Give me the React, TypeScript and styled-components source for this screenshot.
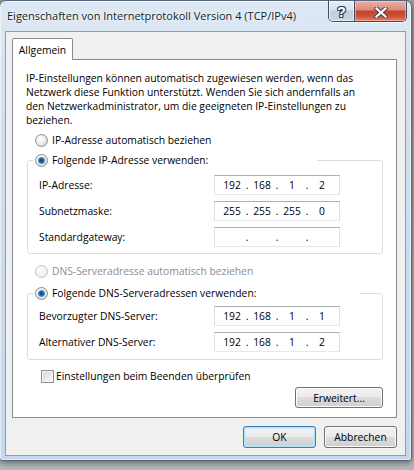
import styled, { createGlobalStyle } from "styled-components";

const GlobalStyle = createGlobalStyle`
  html, body {
    margin: 0;
    padding: 0;
  }
  body {
    background: #b4b6b9;
    font-family: "Open Sans", "Noto Sans", sans-serif;
    font-size: 10.3px;
    color: #000;
  }
`;

type Ip = [string, string, string, string];

const ipRows: { label: string; value: Ip }[] = [
  { label: "IP-Adresse:", value: ["192", "168", "1", "2"] },
  { label: "Subnetzmaske:", value: ["255", "255", "255", "0"] },
  { label: "Standardgateway:", value: ["", "", "", ""] },
];

const dnsRows: { label: string; value: Ip }[] = [
  { label: "Bevorzugter DNS-Server:", value: ["192", "168", "1", "1"] },
  { label: "Alternativer DNS-Server:", value: ["192", "168", "1", "2"] },
];

const IpField = ({ value }: { value: Ip }) => (
  <IpBox>
    {value.map((part, i) => (
      <IpPart key={i}>
        <Octet>{part}</Octet>
        {i < 3 && <Dot>.</Dot>}
      </IpPart>
    ))}
  </IpBox>
);

const App = () => {
  return (
    <Desktop>
      <GlobalStyle />
      <Window>
        <TitleBar>
          <Title>Eigenschaften von Internetprotokoll Version 4 (TCP/IPv4)</Title>
          <CaptionButtons>
            <HelpButton>?</HelpButton>
            <CloseButton>
              <svg width="14" height="11" viewBox="0 0 14 11">
                <path
                  d="M2.5 1.5 L11.5 9.5 M11.5 1.5 L2.5 9.5"
                  stroke="#3a4656"
                  strokeWidth="4.2"
                  strokeLinecap="square"
                />
                <path
                  d="M2.5 1.5 L11.5 9.5 M11.5 1.5 L2.5 9.5"
                  stroke="#ffffff"
                  strokeWidth="2.2"
                  strokeLinecap="square"
                />
              </svg>
            </CloseButton>
          </CaptionButtons>
        </TitleBar>

        <Client>
          <TabStrip>
            <Tab>Allgemein</Tab>
          </TabStrip>
          <Panel>
            <Intro>
              IP-Einstellungen können automatisch zugewiesen werden, wenn das
              <br />
              Netzwerk diese Funktion unterstützt. Wenden Sie sich andernfalls an
              <br />
              den Netzwerkadministrator, um die geeigneten IP-Einstellungen zu
              <br />
              beziehen.
            </Intro>

            <OptionRow $top={6}>
              <Radio />
              <span>IP-Adresse automatisch beziehen</span>
            </OptionRow>

            <GroupBox $top={6} $padTop={8} $padBottom={6}>
              <GroupLegend $width={284}>
                <Radio $checked />
                <span>Folgende IP-Adresse verwenden:</span>
              </GroupLegend>
              <FieldGrid>
                {ipRows.map((row) => (
                  <FieldRow key={row.label}>
                    <FieldLabel>{row.label}</FieldLabel>
                    <IpField value={row.value} />
                  </FieldRow>
                ))}
              </FieldGrid>
            </GroupBox>

            <OptionRow $top={10} $disabled>
              <Radio $disabled />
              <span>DNS-Serveradresse automatisch beziehen</span>
            </OptionRow>

            <GroupBox $top={8} $padTop={6} $padBottom={7}>
              <GroupLegend $width={327}>
                <Radio $checked />
                <span>Folgende DNS-Serveradressen verwenden:</span>
              </GroupLegend>
              <FieldGrid>
                {dnsRows.map((row) => (
                  <FieldRow key={row.label}>
                    <FieldLabel>{row.label}</FieldLabel>
                    <IpField value={row.value} />
                  </FieldRow>
                ))}
              </FieldGrid>
            </GroupBox>

            <CheckRow>
              <CheckBox />
              <span>Einstellungen beim Beenden überprüfen</span>
            </CheckRow>

            <AdvancedRow>
              <Button $w={88} $h={21}>
                Erweitert...
              </Button>
            </AdvancedRow>
          </Panel>

          <Footer>
            <Button $w={73} $h={22} $primary>
              OK
            </Button>
            <Button $w={73} $h={22}>
              Abbrechen
            </Button>
          </Footer>
        </Client>
      </Window>
    </Desktop>
  );
};

export default App;

const Desktop = styled.div`
  width: 414px;
  height: 470px;
  overflow: hidden;
  background: linear-gradient(180deg, #9a9ea2 0%, #b6b8ba 100%);
`;

const Window = styled.div`
  box-sizing: border-box;
  width: 413px;
  height: 461px;
  margin-left: -1px;
  padding: 0 5px 4px 5px;
  border: 1px solid #56677c;
  border-radius: 7px 7px 3px 3px;
  background: linear-gradient(180deg, #dde8f3 0%, #d0def0 30%, #c4d7ed 100%);
  box-shadow: 0 2px 6px rgba(0, 0, 0, 0.45),
    inset 0 0 0 1px rgba(255, 255, 255, 0.55);
  display: flex;
  flex-direction: column;
`;

const TitleBar = styled.div`
  height: 30px;
  display: flex;
  justify-content: space-between;
  align-items: flex-start;
`;

const Title = styled.div`
  margin: 7px 0 0 2px;
  font-size: 11px;
  line-height: 16px;
  color: #111c2a;
  white-space: nowrap;
  text-shadow: 0 0 6px rgba(255, 255, 255, 0.95), 0 0 2px #fff;
`;

const CaptionButtons = styled.div`
  display: flex;
  height: 20px;
  margin-right: -1px;
  border: 1px solid #3d4c5f;
  border-top: none;
  border-radius: 0 0 5px 5px;
  overflow: hidden;
  box-shadow: 0 1px 0 rgba(255, 255, 255, 0.7);
`;

const HelpButton = styled.div`
  width: 26px;
  display: flex;
  justify-content: center;
  align-items: center;
  padding-top: 2px;
  box-sizing: border-box;
  border-right: 1px solid #3d4c5f;
  background: linear-gradient(
    180deg,
    #e9eff6 0%,
    #d8e2ee 45%,
    #bfcddd 50%,
    #c9d6e5 100%
  );
  box-shadow: inset 0 0 0 1px rgba(255, 255, 255, 0.6);
  font-family: "Liberation Sans", Arial, sans-serif;
  font-weight: 700;
  font-size: 14px;
  color: #fff;
  text-shadow: 1px 0 #3a4656, -1px 0 #3a4656, 0 1px #3a4656, 0 -1px #3a4656,
    1px 1px #3a4656, -1px -1px #3a4656, 1px -1px #3a4656, -1px 1px #3a4656;
`;

const CloseButton = styled.div`
  width: 51px;
  display: flex;
  justify-content: center;
  align-items: center;
  padding-top: 2px;
  box-sizing: border-box;
  background: linear-gradient(
    180deg,
    #eab0a3 0%,
    #dc8a78 45%,
    #c6432e 50%,
    #cc4f37 75%,
    #de8365 100%
  );
  box-shadow: inset 0 0 0 1px rgba(255, 220, 210, 0.5);
`;

const Client = styled.div`
  box-sizing: border-box;
  width: 401px;
  height: 425px;
  padding: 6px 8px 0 6px;
  border: 1px solid #8d9eb3;
  background: #f0f0f0;
  display: flex;
  flex-direction: column;
`;

const TabStrip = styled.div`
  display: flex;
`;

const Tab = styled.div`
  position: relative;
  z-index: 1;
  box-sizing: border-box;
  width: 61px;
  height: 22px;
  margin-bottom: -1px;
  display: flex;
  justify-content: center;
  align-items: center;
  border: 1px solid #898c95;
  border-bottom: none;
  border-radius: 2px 2px 0 0;
  background: #fff;
`;

const Panel = styled.div`
  box-sizing: border-box;
  width: 385px;
  height: 359px;
  padding: 11px 13px 0 13px;
  border: 1px solid #898c95;
  background: #fff;
  display: flex;
  flex-direction: column;
`;

const Intro = styled.p`
  margin: 0;
  line-height: 14px;
  white-space: nowrap;
`;

const OptionRow = styled.div<{ $top: number; $disabled?: boolean }>`
  display: flex;
  align-items: center;
  gap: 4px;
  height: 14px;
  margin-top: ${({ $top }) => $top}px;
  padding-left: 9px;
  color: ${({ $disabled }) => ($disabled ? "#8d8d8d" : "#000")};
`;

const Radio = styled.span<{ $checked?: boolean; $disabled?: boolean }>`
  flex: none;
  box-sizing: border-box;
  width: 13px;
  height: 13px;
  border-radius: 50%;
  border: 1px solid ${({ $disabled }) => ($disabled ? "#c4c4c4" : "#8b8c8c")};
  background: ${({ $disabled }) =>
    $disabled
      ? "radial-gradient(circle at 40% 35%, #fbfbfb 0%, #f2f2f2 60%, #e6e6e6 100%)"
      : "radial-gradient(circle at 40% 35%, #ffffff 0%, #eeeeee 45%, #cfcfcf 100%)"};
  display: flex;
  align-items: center;
  justify-content: center;

  &::after {
    content: "";
    display: ${({ $checked }) => ($checked ? "block" : "none")};
    width: 7px;
    height: 7px;
    border-radius: 50%;
    background: radial-gradient(
      circle at 50% 50%,
      #153f66 0%,
      #2462a0 40%,
      #5fb0e4 75%,
      #a8dbf6 100%
    );
  }
`;

const GroupBox = styled.fieldset<{
  $top: number;
  $padTop: number;
  $padBottom: number;
}>`
  box-sizing: border-box;
  width: 356px;
  margin: ${({ $top }) => $top}px 0 0 1px;
  padding: ${({ $padTop, $padBottom }) => `${$padTop}px 0 ${$padBottom}px 11px`};
  border: 1px solid #d5dfe5;
  border-radius: 3px;
  min-width: 0;
`;

const GroupLegend = styled.legend<{ $width: number }>`
  box-sizing: border-box;
  width: ${({ $width }) => $width}px;
  height: 14px;
  margin-left: -6px;
  padding: 0 2px;
  display: flex;
  align-items: center;
  gap: 4px;
  background: #fff;
`;

const FieldGrid = styled.div`
  display: flex;
  flex-direction: column;
  gap: 6px;
`;

const FieldRow = styled.div`
  display: grid;
  grid-template-columns: 175px 126px;
  align-items: center;
  height: 20px;
`;

const FieldLabel = styled.span`
  white-space: nowrap;
`;

const IpBox = styled.div`
  box-sizing: border-box;
  height: 20px;
  padding-left: 4px;
  display: flex;
  align-items: center;
  border: 1px solid #dbdfe6;
  border-top-color: #abadb3;
  border-bottom-color: #e3e9ef;
  background: #fff;
`;

const IpPart = styled.div`
  display: flex;
  align-items: center;
`;

const Octet = styled.span`
  width: 26px;
  text-align: center;
`;

const Dot = styled.span`
  width: 4px;
  text-align: center;
`;

const CheckRow = styled.div`
  display: flex;
  align-items: center;
  gap: 2px;
  height: 14px;
  margin-top: 9px;
  padding-left: 15px;
`;

const CheckBox = styled.span`
  flex: none;
  box-sizing: border-box;
  width: 13px;
  height: 13px;
  border: 1px solid #8e8f8f;
  background: linear-gradient(135deg, #d2d2d2 0%, #ececec 55%, #fafafa 100%);
  box-shadow: inset 0 0 0 1px #f4f4f4;
`;

const AdvancedRow = styled.div`
  display: flex;
  justify-content: flex-end;
  margin-top: 4px;
`;

const Footer = styled.div`
  display: flex;
  justify-content: flex-end;
  gap: 8px;
  margin-top: 8px;
`;

const Button = styled.button<{ $w: number; $h: number; $primary?: boolean }>`
  box-sizing: border-box;
  width: ${({ $w }) => $w}px;
  height: ${({ $h }) => $h}px;
  padding: 0;
  border: 1px solid ${({ $primary }) => ($primary ? "#3c7fb1" : "#707070")};
  border-radius: 3px;
  background: linear-gradient(
    180deg,
    #f2f2f2 0%,
    #ebebeb 49%,
    #dddddd 50%,
    #cfcfcf 100%
  );
  box-shadow: ${({ $primary }) =>
    $primary
      ? "inset 0 0 0 1px #aee2fb, inset 0 0 0 2px rgba(190, 232, 252, 0.5)"
      : "inset 0 0 0 1px #fcfcfc"};
  font: inherit;
  color: #000;
  text-align: center;
`;
